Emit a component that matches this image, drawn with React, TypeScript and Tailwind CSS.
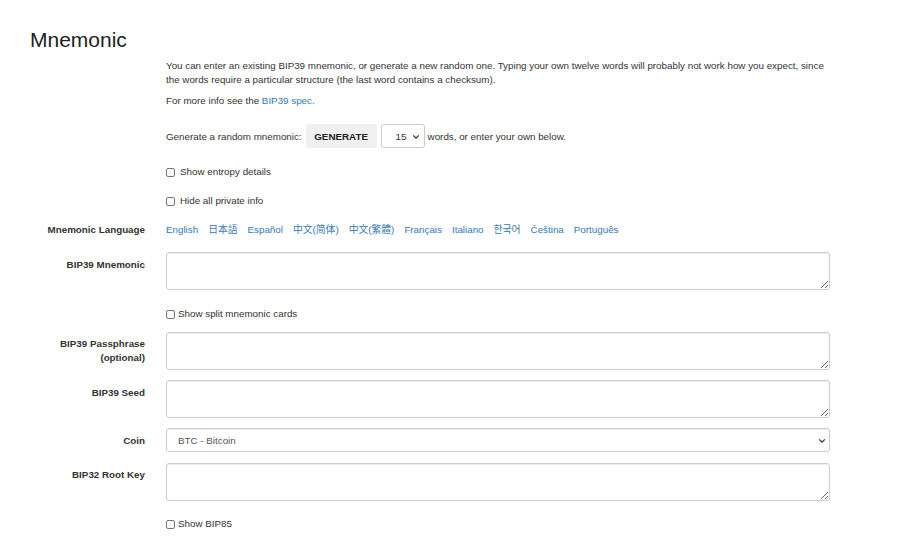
import React from "react";

const font = { fontFamily: '"Liberation Sans", Arial, "Noto Sans CJK SC", "Noto Sans CJK JP", "Noto Sans CJK KR", sans-serif' };

function Box() {
  return <span className="inline-block w-[9px] h-[9px] border border-[#767676] rounded-[2px] bg-white shrink-0" />;
}

function Chevron() {
  return (
    <svg width="8" height="6" viewBox="0 0 8 6" className="pointer-events-none">
      <path d="M1.2 1.4 L4 4.1 L6.8 1.4" fill="none" stroke="#333" strokeWidth="1.3" />
    </svg>
  );
}

function Row({ label, label2, children, top = "pt-[6px]" }: { label: string; label2?: string; children: React.ReactNode; top?: string }) {
  return (
    <div className="flex">
      <div className={`w-[115px] shrink-0 text-right font-bold leading-[14px] ${top}`}>
        <div>{label}</div>
        {label2 && <div>{label2}</div>}
      </div>
      <div className="ml-[21px] w-[664px]">{children}</div>
    </div>
  );
}

function TA() {
  return (
    <textarea className="block w-full h-[38px] border border-[#ccc] rounded-[3px] shadow-[inset_0_1px_1px_rgba(0,0,0,0.075)] bg-white" />
  );
}

export default function App() {
  return (
    <div className="bg-white w-[900px] h-[547px] overflow-hidden text-[#333] text-[9.8px] leading-[14px]" style={font}>
      <div className="pt-[28px] pl-[30px]">
        <h1 className="text-[21px] leading-[23px] font-normal text-[#222]">Mnemonic</h1>
        <div className="ml-[136px] w-[664px]">
          <p className="mt-[8px]">
            You can enter an existing BIP39 mnemonic, or generate a new random one. Typing your own twelve words will probably not work how you expect, since the words require a particular structure (the last word contains a checksum).
          </p>
          <p className="mt-[7px]">
            For more info see the <span className="text-[#337ab7]">BIP39 spec.</span>
          </p>
          <div className="mt-[16px] flex items-center h-[24px]">
            <span className="pt-[1px]">Generate a random mnemonic:</span>
            <button className="ml-[4px] h-[24px] w-[71px] bg-[#f0f0f0] rounded-[2px] font-bold text-[#222] text-[9.8px] pt-[1px]">GENERATE</button>
            <div className="relative ml-[4px] h-[24px] w-[44px] border border-[#ccc] rounded-[3px] flex items-center">
              <span className="ml-[14px] pt-[1px]">15</span>
              <span className="absolute right-[4px] top-[9px]"><Chevron /></span>
            </div>
            <span className="ml-[3px] pt-[1px]">words, or enter your own below.</span>
          </div>
          <label className="mt-[17px] flex items-center gap-[5px]"><Box /><span>Show entropy details</span></label>
          <label className="mt-[15px] flex items-center gap-[5px]"><Box /><span>Hide all private info</span></label>
        </div>
        <div className="mt-[15px]">
          <Row label="Mnemonic Language" top="pt-0">
            <div className="flex gap-[10px] text-[#337ab7] leading-[14px]">
              {["English", "日本語", "Español", "中文(简体)", "中文(繁體)", "Français", "Italiano", "한국어", "Čeština", "Português"].map((l) => (
                <span key={l}>{l}</span>
              ))}
            </div>
          </Row>
        </div>
        <div className="mt-[15px]">
          <Row label="BIP39 Mnemonic"><TA /></Row>
        </div>
        <div className="ml-[136px] mt-[17px] flex items-center gap-[3px]"><Box /><span>Show split mnemonic cards</span></div>
        <div className="mt-[11px]">
          <Row label="BIP39 Passphrase" label2="(optional)" top="pt-[5px]"><TA /></Row>
        </div>
        <div className="mt-[10px]">
          <Row label="BIP39 Seed"><TA /></Row>
        </div>
        <div className="mt-[10px]">
          <Row label="Coin">
            <div className="relative h-[24px] w-full border border-[#ccc] rounded-[3px] flex items-center shadow-[inset_0_1px_1px_rgba(0,0,0,0.075)]">
              <span className="ml-[11px] pt-[1px] text-[#555]">BTC - Bitcoin</span>
              <span className="absolute right-[3px] top-[9px]"><Chevron /></span>
            </div>
          </Row>
        </div>
        <div className="mt-[11px]">
          <Row label="BIP32 Root Key" top="pt-[5px]"><TA /></Row>
        </div>
        <div className="ml-[136px] mt-[16px] flex items-center gap-[3px]"><Box /><span>Show BIP85</span></div>
      </div>
    </div>
  );
}
